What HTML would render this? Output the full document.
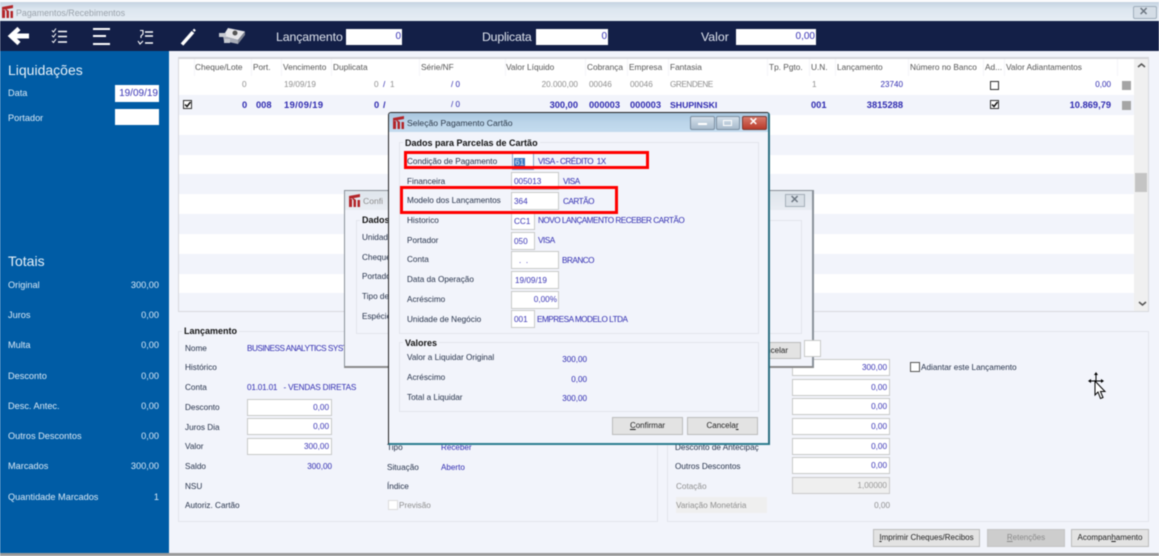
<!DOCTYPE html>
<html lang="pt"><head><meta charset="utf-8"><title>Pagamentos/Recebimentos</title>
<style>
html,body{margin:0;padding:0;background:#f2f4fb;}
#p{position:relative;width:1159px;height:556px;overflow:hidden;background:#f2f4fb;font:8.2px/14px "Liberation Sans",sans-serif;color:#26324a;filter:blur(.4px);}
#p div,#p span.a{position:absolute;box-sizing:border-box;}
.t{position:absolute;white-space:nowrap;}
.k{line-height:12px;}
.r{text-align:right;}
.b{color:#2f2bb0;font-size:8.1px;}
.c{font-size:8.2px;letter-spacing:-.5px;}
.g{color:#8f8f8f;}
.w{color:#d9e9f6;font-size:9.2px;line-height:12px;}
.t.B{font-weight:bold;font-size:9.3px;}
.i{background:#fff;border:1.5px solid #c9c9c9;color:#3a35b5;text-align:right;padding-right:2px;line-height:16px;white-space:nowrap;}
.l{text-align:left;padding:0 0 0 2px;line-height:17px;}
.gp{border:1px solid #e3e5ec;}
.gl{background:#f2f4fb;font-weight:bold;color:#111;padding:0 2px;white-space:nowrap;font-size:9px;line-height:11px;}
.btn{background:#e3e3e3;border:1.5px solid #bcbcbc;text-align:center;line-height:15px;color:#222;white-space:nowrap;font-size:8px;}
.h{color:#555;font-size:8.3px;line-height:12px;}
.sep{width:1px;background:#f4f4f8;top:59px;height:17px;}
.st{left:179px;width:955px;height:20px;background:#f2f4fb;}
.n{color:#dfe4ee;font-size:12.3px;line-height:14px;}
u{text-decoration:underline;}
</style></head><body><div id="p">

<!-- title bar -->
<div style="left:0;top:0;width:1159px;height:3px;background:#fdfdfd"></div>
<div style="left:0;top:2px;width:1159px;height:19px;background:linear-gradient(#c5d3e2,#dde7f0 40%,#e6edf4)"></div>
<svg style="position:absolute;left:2px;top:5px" width="12" height="14" viewBox="0 0 12 14"><path d="M0 2L11 0V3L0 5ZM0 5H3V13H0ZM4.500 6H7V13H4.500ZM8.500 6H11V13H8.500ZM3 3L7 6H4Z" fill="#b3262a"/></svg>
<span class="t k" style="left:16px;top:6.500px;color:#9aa2ab;font-size:8.900px">Pagamentos/Recebimentos</span>
<div style="left:1133px;top:6px;width:24px;height:13px;border:1px solid #9fadbb;background:#d4dde6;border-radius:2px"></div>
<span class="t k" style="left:1139px;top:6px;color:#6d7782;font-size:11px;font-weight:bold">&#10005;</span>

<!-- navy bar -->
<div style="left:0;top:21px;width:1159px;height:30px;background:#131f47"></div>
<svg style="position:absolute;left:0;top:21px" width="260" height="30" viewBox="0 0 260 30" fill="none" stroke="#fff">
<path d="M29 15H14" stroke-width="5"/><path d="M19 7.500L11 15L19 22.500" stroke-width="4.500"/>
<g stroke-width="1.500"><path d="M58 10.500H67M58 15.500H67M58 21H67" /><path d="M52 9.500L53.500 11L56 7.500M52 14.500L53.500 16L56 12.500M52 20L53.500 21.500L56 18" stroke-width="1"/></g>
<path d="M93 8H110M93 15H106M93 23H110" stroke-width="2"/>
<path d="M145 11H153M145 15H153M145 22H153" stroke-width="1.500"/><path d="M140 9.500H143V13L141 15V17M138 20L140 23L143 20" stroke-width="1.100"/>
<path d="M182 23.500L193 11" stroke-width="3.500"/><path d="M193.500 10L195 8.500" stroke-width="2.500"/>
<path d="M228 7L245 10.500L238 19L223 15Z" fill="#e6e6ea" stroke="none"/><path d="M223 15L238 19L238 23L224 20Z" fill="#a9adb8" stroke="none"/><path d="M238 19L245 10.500V14L238 23Z" fill="#7d8290" stroke="none"/><path d="M219 12H226V16H219ZM224 18H230V22H224Z" fill="#c5c8d0" stroke="none"/><circle cx="235" cy="12" r="2.500" fill="#555" stroke="none"/>
</svg>
<span class="t n" style="left:276px;top:30px;letter-spacing:-.1px">Lançamento</span>
<div class="i" style="left:346px;top:29px;width:56px;height:16px;border:0;font-size:10px;line-height:16px;padding-right:1px">0</div>
<span class="t n" style="left:482px;top:30px;letter-spacing:-.2px">Duplicata</span>
<div class="i" style="left:536px;top:29px;width:72px;height:16px;border:0;font-size:10px;line-height:16px;padding-right:1px">0</div>
<span class="t n" style="left:701px;top:30px">Valor</span>
<div class="i" style="left:736px;top:29px;width:80px;height:16px;border:0;font-size:10px;line-height:16px;padding-right:1px">0,00</div>

<!-- sidebar -->
<div style="left:0;top:51px;width:169px;height:502px;background:#005ca5"></div>
<span class="t" style="left:8px;top:62px;color:#e6f0f8;font-size:14px;line-height:16px">Liquidações</span>
<span class="t w" style="left:8px;top:87px">Data</span>
<div class="i" style="left:115px;top:85px;width:44px;height:17px;border:0;font-size:10px;line-height:17px;padding-right:1px">19/09/19</div>
<span class="t w" style="left:8px;top:112px">Portador</span>
<div class="i" style="left:115px;top:109px;width:44px;height:16px;border:0"></div>
<span class="t" style="left:8px;top:253px;color:#e6f0f8;font-size:14px;line-height:16px">Totais</span>
<span class="t w" style="left:8px;top:279px">Original</span><span class="t w r" style="right:1000px;top:279px">300,00</span>
<span class="t w" style="left:8px;top:309px">Juros</span><span class="t w r" style="right:1000px;top:309px">0,00</span>
<span class="t w" style="left:8px;top:339px">Multa</span><span class="t w r" style="right:1000px;top:339px">0,00</span>
<span class="t w" style="left:8px;top:370px">Desconto</span><span class="t w r" style="right:1000px;top:370px">0,00</span>
<span class="t w" style="left:8px;top:400px">Desc. Antec.</span><span class="t w r" style="right:1000px;top:400px">0,00</span>
<span class="t w" style="left:8px;top:430px">Outros Descontos</span><span class="t w r" style="right:1000px;top:430px">0,00</span>
<span class="t w" style="left:8px;top:460px">Marcados</span><span class="t w r" style="right:1000px;top:460px">300,00</span>
<span class="t w" style="left:8px;top:491px">Quantidade Marcados</span><span class="t w r" style="right:1000px;top:491px">1</span>

<!-- bottom edge -->
<div style="left:0;top:553px;width:1159px;height:3px;background:#9a9a9a"></div>

<!-- grid -->
<div style="left:178px;top:57px;width:971px;height:255px;background:#fff;border:1px solid #d8d9de;border-top:2px solid #d5d5da"></div>
<div class="st" style="top:95px"></div><div class="st" style="top:135px"></div><div class="st" style="top:174px"></div><div class="st" style="top:214px"></div><div class="st" style="top:254px"></div><div class="st" style="top:293px;height:18px"></div>
<div style="left:1134px;top:59px;width:14px;height:252px;background:#f0f0f0"></div>
<div style="left:1135px;top:173px;width:12px;height:19px;background:#c4c4c4"></div>
<svg style="position:absolute;left:1137px;top:62px" width="10" height="6"><path d="M1 5L4.500 2L8 5" fill="none" stroke="#555" stroke-width="1.500"/></svg>
<svg style="position:absolute;left:1138px;top:301px" width="10" height="6"><path d="M1 1L4.500 4L8 1" fill="none" stroke="#555" stroke-width="1.500"/></svg>
<div class="sep" style="left:194px"></div><div class="sep" style="left:251px"></div><div class="sep" style="left:281px"></div><div class="sep" style="left:331px"></div><div class="sep" style="left:419px"></div><div class="sep" style="left:505px"></div><div class="sep" style="left:585px"></div><div class="sep" style="left:627px"></div><div class="sep" style="left:668px"></div><div class="sep" style="left:767px"></div><div class="sep" style="left:809px"></div><div class="sep" style="left:835px"></div><div class="sep" style="left:908px"></div><div class="sep" style="left:983px"></div><div class="sep" style="left:1004px"></div><div class="sep" style="left:1117px"></div>
<span class="t h" style="left:195px;top:61px">Cheque/Lote</span><span class="t h" style="left:253px;top:61px">Port.</span><span class="t h" style="left:283px;top:61px">Vencimento</span><span class="t h" style="left:333px;top:61px">Duplicata</span><span class="t h" style="left:421px;top:61px">Série/NF</span><span class="t h" style="left:506px;top:61px">Valor Líquido</span><span class="t h" style="left:587px;top:61px">Cobrança</span><span class="t h" style="left:629px;top:61px">Empresa</span><span class="t h" style="left:670px;top:61px">Fantasia</span><span class="t h" style="left:769px;top:61px">Tp. Pgto.</span><span class="t h" style="left:811px;top:61px">U.N.</span><span class="t h" style="left:837px;top:61px">Lançamento</span><span class="t h" style="left:910px;top:61px">Número no Banco</span><span class="t h" style="left:985px;top:61px">Ad...</span><span class="t h" style="left:1006px;top:61px">Valor Adiantamentos</span>

<span class="t g" style="left:242px;top:78px">0</span><span class="t g" style="left:284px;top:78px">19/09/19</span><span class="t g" style="left:374px;top:78px">0</span><span class="t b" style="left:383px;top:78px">/</span><span class="t g" style="left:390px;top:78px">1</span><span class="t b" style="left:451px;top:78px">/ 0</span><span class="t g r" style="right:581px;top:78px">20.000,00</span><span class="t g" style="left:589px;top:78px">00046</span><span class="t g" style="left:630px;top:78px">00046</span><span class="t g" style="left:670px;top:78px;font-size:8.200px;letter-spacing:-.45px">GRENDENE</span><span class="t g" style="left:812px;top:78px">1</span><span class="t b r" style="right:256px;top:78px">23740</span><span class="t b r" style="right:48px;top:78px">0,00</span>
<div style="left:990px;top:81px;width:9px;height:9px;border:1px solid #333;background:#fff"></div>
<div style="left:1122px;top:81px;width:9px;height:9px;background:#a5a5a5"></div>

<div style="left:183px;top:100px;width:9px;height:9px;border:1px solid #333;background:#fff"></div>
<div style="left:990px;top:100px;width:9px;height:9px;border:1px solid #333;background:#fff"></div>
<svg style="position:absolute;left:183px;top:100px" width="9" height="9"><path d="M2 4.500L4 6.500L7.500 2" fill="none" stroke="#111" stroke-width="1.500"/></svg>
<svg style="position:absolute;left:990px;top:100px" width="9" height="9"><path d="M2 4.500L4 6.500L7.500 2" fill="none" stroke="#111" stroke-width="1.500"/></svg>
<div style="left:1122px;top:101px;width:9px;height:9px;background:#a5a5a5"></div>
<span class="t b B" style="left:242px;top:98px">0</span><span class="t b B" style="left:256px;top:98px">008</span><span class="t b B" style="left:284px;top:98px;letter-spacing:.4px">19/09/19</span><span class="t b B" style="left:374px;top:98px">0</span><span class="t b B" style="left:383px;top:98px">/</span><span class="t b" style="left:451px;top:98px">/ 0</span><span class="t b B r" style="right:581px;top:98px">300,00</span><span class="t b B" style="left:589px;top:98px">000003</span><span class="t b B" style="left:630px;top:98px">000003</span><span class="t b B" style="left:670px;top:98px;font-size:8.700px">SHUPINSKI</span><span class="t b B" style="left:811px;top:98px">001</span><span class="t b B r" style="right:256px;top:98px">3815288</span><span class="t b B r" style="right:48px;top:98px">10.869,79</span>

<!-- Lancamento group -->
<div class="gp" style="left:178px;top:331px;width:480px;height:191px"></div>
<div class="gl" style="left:182px;top:326px">Lançamento</div>
<span class="t" style="left:185px;top:342px">Nome</span><span class="t b c" style="left:247px;top:342px">BUSINESS ANALYTICS SYST</span>
<span class="t" style="left:185px;top:361px">Histórico</span>
<span class="t" style="left:185px;top:381px">Conta</span><span class="t b c" style="left:247px;top:381px;letter-spacing:-.2px">01.01.01 &nbsp; - VENDAS DIRETAS</span>
<span class="t" style="left:185px;top:401px">Desconto</span><div class="i" style="left:247px;top:399px;width:85px;height:17px">0,00</div>
<span class="t" style="left:185px;top:421px">Juros Dia</span><div class="i" style="left:247px;top:418px;width:85px;height:17px">0,00</div>
<span class="t" style="left:185px;top:440px">Valor</span><div class="i" style="left:247px;top:438px;width:85px;height:17px">300,00</div>
<span class="t" style="left:185px;top:460px">Saldo</span><span class="t b r" style="right:827px;top:460px">300,00</span>
<span class="t" style="left:185px;top:480px">NSU</span>
<span class="t" style="left:185px;top:499px">Autoriz. Cartão</span>
<span class="t" style="left:387px;top:441px">Tipo</span><span class="t b" style="left:441px;top:441px">Receber</span>
<span class="t" style="left:387px;top:461px">Situação</span><span class="t b" style="left:441px;top:461px">Aberto</span>
<span class="t" style="left:387px;top:480px">Índice</span>
<div style="left:388px;top:500px;width:10px;height:10px;background:#fff;border:1px solid #ddd"></div>
<span class="t g" style="left:399px;top:499px">Previsão</span>

<!-- right group -->
<div class="gp" style="left:667px;top:331px;width:482px;height:191px"></div>
<span class="t" style="left:675px;top:441px">Desconto de Antecipaç</span>
<span class="t" style="left:675px;top:460px">Outros Descontos</span>
<span class="t g" style="left:676px;top:480px">Cotação</span>
<div style="left:676px;top:497px;width:91px;height:16px;background:#efefef"></div>
<span class="t g" style="left:676px;top:499px">Variação Monetária</span>
<div class="i" style="left:792px;top:359px;width:98px;height:17px">300,00</div>
<div class="i" style="left:792px;top:379px;width:98px;height:17px">0,00</div>
<div class="i" style="left:792px;top:398px;width:98px;height:17px">0,00</div>
<div class="i" style="left:792px;top:418px;width:98px;height:17px">0,00</div>
<div class="i" style="left:792px;top:438px;width:98px;height:17px">0,00</div>
<div class="i" style="left:792px;top:457px;width:98px;height:17px">0,00</div>
<div class="i" style="left:792px;top:477px;width:98px;height:17px;background:#efefef;color:#999">1,00000</div>
<span class="t g r" style="right:269px;top:499px">0,00</span>
<div style="left:910px;top:362px;width:10px;height:10px;background:#fff;border:1px solid #555"></div>
<span class="t" style="left:921px;top:361px">Adiantar este Lançamento</span>

<div class="btn" style="left:873px;top:529px;width:107px;height:18px"><u>I</u>mprimir Cheques/Recibos</div>
<div class="btn" style="left:987px;top:529px;width:78px;height:18px;background:#cdcdcd;color:#8a8a8a;border-color:#c4c4c4"><u>R</u>etenções</div>
<div class="btn" style="left:1071px;top:529px;width:78px;height:18px">Acompan<u>h</u>amento</div>

<svg style="position:absolute;left:1087px;top:370px" width="22" height="32" viewBox="0 0 22 32"><path d="M2 11H15M9 4V17" stroke="#000" stroke-width="1"/><path d="M9 2L7 5H11ZM1 11L4 9V13ZM17 11L14 9V13Z" fill="#000"/><path d="M8 11V25L11 22L13.500 28.500L16 27.500L13.500 21.500H18Z" fill="#fff" stroke="#000" stroke-width="1"/></svg>

<!-- back dialog -->
<div style="left:344px;top:190px;width:470px;height:178px;background:#f2f4fb;border:1px solid #8a9199;border-bottom:2px solid #8a8a8a;border-right:2px solid #8a9199"></div>
<div style="left:345px;top:191px;width:467px;height:19px;background:linear-gradient(#dfe5ec,#e9edf3)"></div>
<svg style="position:absolute;left:349px;top:194px" width="12" height="14" viewBox="0 0 12 14"><path d="M0 2L11 0V3L0 5ZM0 5H3V13H0ZM4.500 6H7V13H4.500ZM8.500 6H11V13H8.500ZM3 3L7 6H4Z" fill="#b3262a"/></svg>
<span class="t g k" style="left:363px;top:195px;font-size:8.600px">Confi</span>
<div style="left:785px;top:194px;width:20px;height:13px;border:1px solid #a5afb9;background:#d8dfe6"></div>
<span class="t k" style="left:790px;top:194px;color:#6d7782;font-size:11px;font-weight:bold">&#10005;</span>
<div class="gp" style="left:356px;top:220px;width:446px;height:114px"></div>
<div class="gl" style="left:360px;top:215px">Dados</div>
<span class="t" style="left:362px;top:231px">Unidade</span>
<span class="t" style="left:362px;top:251px">Cheque</span>
<span class="t" style="left:362px;top:270px">Portador</span>
<span class="t" style="left:362px;top:290px">Tipo de</span>
<span class="t" style="left:362px;top:310px">Espécie</span>
<div class="btn" style="left:745px;top:342px;width:56px;height:17px;text-align:right;padding-right:12px">Cancelar</div>
<div class="i" style="left:804px;top:340px;width:17px;height:17px"></div>

<!-- front dialog -->
<div style="left:388px;top:112px;width:382px;height:333px;background:#f2f4fb;border:1px solid #222;border-right:2px solid #2c6f80;border-bottom:2px solid #2c7d8f;border-radius:3px 3px 0 0"></div>
<div style="left:389px;top:113px;width:379px;height:19px;background:linear-gradient(#a9c7df,#bcd5ea 50%,#c4dcef);border-radius:2px 2px 0 0"></div>
<svg style="position:absolute;left:393px;top:116px" width="12" height="14" viewBox="0 0 12 14"><path d="M0 2L11 0V3L0 5ZM0 5H3V13H0ZM4.500 6H7V13H4.500ZM8.500 6H11V13H8.500ZM3 3L7 6H4Z" fill="#b3262a"/></svg>
<span class="t k" style="left:407px;top:117px;color:#2c3a4a;font-size:8.600px">Seleção Pagamento Cartão</span>
<div style="left:690px;top:116px;width:25px;height:14px;border:1px solid #7c8ea0;background:linear-gradient(#d3dfea,#a9bccd);border-radius:2px"></div>
<div style="left:698px;top:123px;width:9px;height:2px;background:#fff;border:0"></div>
<div style="left:716px;top:116px;width:24px;height:14px;border:1px solid #7c8ea0;background:linear-gradient(#d3dfea,#a9bccd);border-radius:2px"></div>
<div style="left:723px;top:120px;width:9px;height:6px;border:1.500px solid #fff"></div>
<div style="left:742px;top:116px;width:25px;height:14px;border:1px solid #7a3a32;background:linear-gradient(#d77a6c,#b93a2a);border-radius:2px"></div>
<span class="t k" style="left:749px;top:116px;color:#fff;font-size:10.500px;font-weight:bold">&#10005;</span>

<div class="gp" style="left:399px;top:142px;width:360px;height:192px"></div>
<div class="gl" style="left:403px;top:138px">Dados para Parcelas de Cartão</div>
<span class="t" style="left:407px;top:155px">Condição de Pagamento</span>
<div class="i l" style="left:512px;top:153px;width:22px;height:17px;border-color:#8aa6cc;padding-left:1px"><span style="background:#3a78c4;color:#dfe9f5;padding:0 1px">61</span></div>
<span class="t b c" style="left:538px;top:155px">VISA - CRÉDITO &nbsp;1X</span>
<span class="t" style="left:407px;top:175px">Financeira</span>
<div class="i l" style="left:511px;top:172px;width:48px;height:18px">005013</div><span class="t b c" style="left:563px;top:175px">VISA</span>
<span class="t" style="left:407px;top:194px">Modelo dos Lançamentos</span>
<div class="i l" style="left:511px;top:192px;width:48px;height:18px">364</div><span class="t b c" style="left:563px;top:195px">CARTÃO</span>
<span class="t" style="left:407px;top:214px">Historico</span>
<div class="i l" style="left:511px;top:212px;width:24px;height:18px">CC1</div><span class="t b c" style="left:538px;top:214px">NOVO LANÇAMENTO RECEBER CARTÃO</span>
<span class="t" style="left:407px;top:234px">Portador</span>
<div class="i l" style="left:511px;top:232px;width:24px;height:18px">050</div><span class="t b c" style="left:538px;top:234px">VISA</span>
<span class="t" style="left:407px;top:253px">Conta</span>
<div class="i l" style="left:511px;top:251px;width:48px;height:18px;padding-left:7px">. &nbsp;.</div><span class="t b c" style="left:562px;top:254px">BRANCO</span>
<span class="t" style="left:407px;top:273px">Data da Operação</span>
<div class="i l" style="left:511px;top:271px;width:48px;height:18px;padding-left:3px">19/09/19</div>
<span class="t" style="left:407px;top:293px">Acréscimo</span>
<div class="i" style="left:511px;top:291px;width:48px;height:18px;padding-right:1px">0,00%</div>
<span class="t" style="left:407px;top:313px">Unidade de Negócio</span>
<div class="i l" style="left:511px;top:310px;width:24px;height:18px">001</div><span class="t b c" style="left:537px;top:313px">EMPRESA MODELO LTDA</span>

<div style="left:404px;top:151px;width:245px;height:18px;border:3px solid #ff0000"></div>
<div style="left:400px;top:186px;width:218px;height:28px;border:3px solid #ff0000"></div>

<div class="gp" style="left:399px;top:342px;width:360px;height:70px"></div>
<div class="gl" style="left:403px;top:338px">Valores</div>
<span class="t" style="left:407px;top:351px">Valor a Liquidar Original</span><span class="t b r" style="right:572px;top:353px">300,00</span>
<span class="t" style="left:407px;top:371px">Acréscimo</span><span class="t b r" style="right:572px;top:373px">0,00</span>
<span class="t" style="left:407px;top:391px">Total a Liquidar</span><span class="t b r" style="right:572px;top:392px">300,00</span>
<div class="btn" style="left:612px;top:417px;width:71px;height:18px"><u>C</u>onfirmar</div>
<div class="btn" style="left:687px;top:417px;width:71px;height:18px">Cancela<u>r</u></div>

</div></body></html>
